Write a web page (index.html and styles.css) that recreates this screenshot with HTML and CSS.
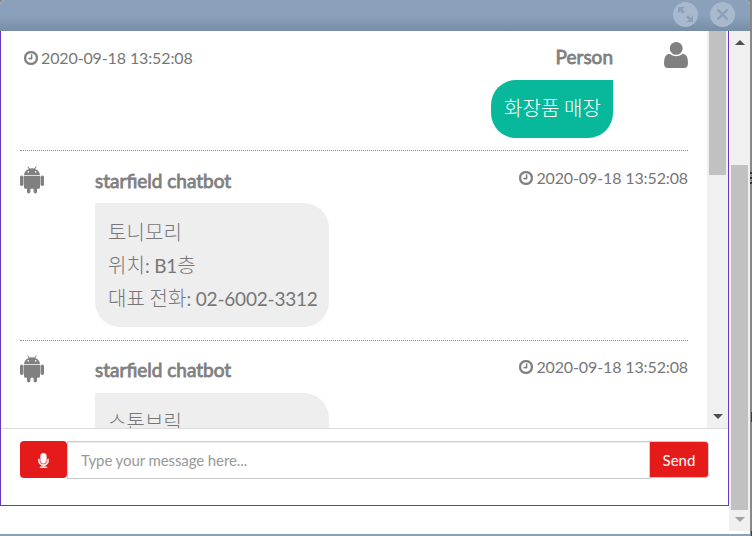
FILE: index.html
```html
<!DOCTYPE html>
<html lang="ko">
<head>
<meta charset="utf-8">
<title>starfield chatbot</title>
<link rel="stylesheet" href="styles.css">
</head>
<body>
<svg class="sprite" aria-hidden="true">
  <symbol id="clock" viewBox="128 128 1536 1536"><path d="M1024 544v448q0 14-9 23t-23 9h-320q-14 0-23-9t-9-23v-64q0-14 9-23t23-9h224v-352q0-14 9-23t23-9h64q14 0 23 9t9 23zm416 352q0-148-73-273t-198-198-273-73-273 73-198 198-73 273 73 273 198 198 273 73 273-73 198-198 73-273zm224 0q0 209-103 385.500t-279.500 279.500-385.500 103-385.500-103-279.500-279.500-103-385.500 103-385.500 279.500-279.500 385.500-103 385.500 103 279.500 279.500 103 385.500z"/></symbol>
  <symbol id="android" viewBox="0 0 24 28">
    <path fill-rule="evenodd" d="M4 9q.2-4.200 4.800-6.100L7.300.7l.6-.4 1.800 2.300q2.300-.6 4.600 0L16.100.3l.6.4L15.200 2.900Q19.800 4.800 20 9zM8.300 5.100a.8.8 0 1 0 0 1.600.8.8 0 0 0 0-1.600zm7.400 0a.8.8 0 1 0 0 1.600.8.8 0 0 0 0-1.600z"/>
    <path d="M4 9.700h16v11.500q0 1.600-1.600 1.600H17v3q0 1.700-1.700 1.700t-1.700-1.700v-3h-3.200v3q0 1.700-1.700 1.700T7 25.800v-3H5.600q-1.600 0-1.600-1.600z"/>
    <rect x="0" y="9.500" width="3.500" height="10.500" rx="1.700"/><rect x="20.500" y="9.500" width="3.500" height="10.500" rx="1.700"/>
  </symbol>
</svg>
<div class="desktop">
<div class="window">
  <header class="titlebar">
    <button class="round" aria-label="Expand"><svg width="25" height="25" viewBox="0 0 25 25"><path d="M5 5h6.500L9.300 7.200l2.500 2.500-2 2-2.500-2.500L5 11.500zM20 20h-6.500l2.200-2.200-2.500-2.500 2-2 2.500 2.500L20 13.500z"/></svg></button>
    <button class="round" aria-label="Close"><svg width="25" height="25" viewBox="0 0 25 25"><path class="cross" d="M7.500 7.500l10 10m0-10l-10 10"/></svg></button>
  </header>
  <div class="body">
    <main class="chat">
      <div class="history">
        <div class="messages">
          <section class="message mine">
            <time><svg class="clock"><use href="#clock"/></svg> 2020-09-18 13:52:08</time>
            <div class="content">
              <h2>Person</h2>
              <div class="bubble"><span class="ko">화장품 매장</span></div>
            </div>
            <svg class="user" viewBox="0 0 24 26"><circle cx="12.200" cy="6.400" r="6.400"/><path d="M5.500 11.800Q8 14.200 12.200 14.200t6.600-2.400Q24 12 24 21.200q0 4.800-3.700 4.800H3.700Q0 26 0 21.200 0 12 5.500 11.800z"/></svg>
          </section>
          <section class="message bot">
            <svg class="android"><use href="#android"/></svg>
            <div class="content">
              <h2>starfield chatbot</h2>
              <div class="bubble"><span class="ko">토니모리</span><br><span class="ko">위치</span>: B1<span class="ko">층</span><br><span class="ko">대표 전화</span>: 02-6002-3312</div>
            </div>
            <time><svg class="clock"><use href="#clock"/></svg> 2020-09-18 13:52:08</time>
          </section>
          <section class="message bot next">
            <svg class="android"><use href="#android"/></svg>
            <div class="content">
              <h2>starfield chatbot</h2>
              <div class="bubble"><span class="ko">스톤브릭</span></div>
            </div>
            <time><svg class="clock"><use href="#clock"/></svg> 2020-09-18 13:52:08</time>
          </section>
        </div>
        <div class="scroll inner"><i class="thumb"></i><i class="arrow down"></i></div>
      </div>
      <form class="composer">
        <button type="button" class="mic" aria-label="Record"><svg viewBox="320 0 1152 1664" width="11" height="15"><path d="M1472 704v128q0 221-147.500 384.500t-364.500 187.500v132h256q26 0 45 19t19 45-19 45-45 19h-640q-26 0-45-19t-19-45 19-45 45-19h256v-132q-217-24-364.500-187.500t-147.500-384.500v-128q0-26 19-45t45-19 45 19 19 45v128q0 185 131.500 316.500t316.500 131.500 316.500-131.500 131.500-316.500v-128q0-26 19-45t45-19 45 19 19 45zm-256-384v512q0 132-94 226t-226 94-226-94-94-226v-512q0-132 94-226t226-94 226 94 94 226z"/></svg></button>
        <input type="text" placeholder="Type your message here...">
        <button type="button" class="send">Send</button>
      </form>
    </main>
    <div class="scroll outer"><i class="arrow up"></i><i class="thumb"></i><i class="arrow down muted"></i></div>
  </div>
</div>
<div class="backdrop"><i class="speck one"></i><i class="speck two"></i><i class="speck three"></i></div>
</div>
</body>
</html>
```
FILE: styles.css
```css
* { box-sizing: border-box; }
body {
  margin: 0;
  width: 752px;
  height: 536px;
  overflow: hidden;
  background: #888;
  font: 16px/20px Lato, "Noto Sans CJK KR", sans-serif;
  color: #777;
}
.sprite { position: absolute; width: 0; height: 0; }
svg { display: block; fill: #808080; }
button, input { font: inherit; border: 0; margin: 0; padding: 0; }
.desktop { display: flex; height: 536px; }
.backdrop { width: 2px; display: flex; flex-direction: column; }
.speck { background: #1d4870; }
.one { height: 14px; margin-top: 172px; background: repeating-linear-gradient(#333 0 2px, #888 2px 5px); }
.two { width: 1px; height: 10px; margin: 226px 0 109px 1px; }
.three { width: 1px; height: 5px; margin-left: 1px; }
.window {
  width: 750px;
  height: 536px;
  display: flex;
  flex-direction: column;
  border-radius: 5px 5px 0 0;
  border-bottom: 2px solid #8aa0bb;
  background: #fff;
  overflow: hidden;
}
.titlebar {
  flex: 0 0 31px;
  display: flex;
  justify-content: flex-end;
  gap: 12px;
  padding: 2px 15px 0 0;
  background: linear-gradient(#8aa0bb 0, #8aa0bb 50%, #778ea7 100%);
}
.round { width: 25px; height: 25px; border-radius: 50%; background: #a9b9cd; }
.round svg { fill: #8aa0bb; }
.round .cross { stroke: #8aa0bb; stroke-width: 2.4; }
.body { flex: 1; display: flex; min-height: 0; }
.chat {
  width: 729px;
  height: 475px;
  border: solid #673ab7;
  border-width: 0 1px 1px;
}
.history { display: flex; height: 397px; overflow: hidden; }
.messages { width: 706px; padding: 0 19px; }
.message { display: flex; align-items: flex-start; }
.mine { height: 120px; border-bottom: 1px dotted #888; }
.bot { height: 190px; border-bottom: 1px dotted #888; }
time { display: flex; align-items: center; gap: 3px; white-space: nowrap; letter-spacing: -0.12px; }
.clock { width: 14px; height: 14px; stroke: #808080; stroke-width: 40; }
.mine time { margin: 17px 0 0 4px; }
.bot time { margin: 17px 0 0 auto; }
.next time { margin-top: 16px; }
.mine .content { margin: 14px 0 0 auto; text-align: right; }
.user { width: 24px; height: 26px; margin: 11px 0 0 51px; }
.android { width: 24px; height: 28px; margin: 15px 51px 0 0; }
.next .android { margin-top: 14px; }
.bot .content { margin-top: 17px; }
.next .content { margin-top: 16px; }
h2 {
  margin: 0;
  font-size: 19px;
  line-height: 25px;
  font-weight: 400;
  color: #808080;
  -webkit-text-stroke: .8px #808080;
}
.mine h2 { margin-top: -1px; padding-bottom: 1px; }
.bubble {
  width: max-content;
  padding: 12px 13px;
  font-size: 19px;
  line-height: 33px;
  white-space: nowrap;
}
.ko { font-size: 20px; font-weight: 300; line-height: 1; letter-spacing: 0.1px; word-spacing: -1px; }
.mine .bubble { margin-top: 10px; height: 58px; width: 122px; color: #fff; background: #08b89b; border-radius: 25px 0 25px 25px; }
.bot .bubble { margin-top: 10px; padding-top: 13px; height: 124px; width: 234px; background: #eee; border-radius: 0 25px 25px 25px; letter-spacing: -0.2px; }
.next .bubble { margin-top: 11px; }
.scroll { background: #f0f0f0; display: flex; flex-direction: column; align-items: center; }
.thumb { display: block; width: 17px; background: #c1c1c1; }
.inner { width: 21px; }
.inner .thumb { height: 144px; }
.inner .down { margin: auto 0 9px; }
.outer { width: 21px; height: 500px; }
.outer .thumb { height: 345px; margin: 120px 0 7px; }
.outer .up { margin-top: 9px; }
.arrow { border: 5px solid transparent; border-width: 0 5px; }
.up { border-bottom: 5px solid #505050; }
.down { border-top: 5px solid #505050; }
.outer .muted { border-top-color: #a3a3a3; }
.composer {
  display: flex;
  align-items: flex-start;
  height: 77px;
  padding: 12px 19px 0 19px;
  border-top: 1px solid #ddd;
}
.mic {
  width: 47px;
  height: 37px;
  display: grid;
  place-items: center;
  border-radius: 4px;
  background: #e51b1b;
}
.mic svg { fill: #fff; stroke: #fff; stroke-width: 50; margin-top: 1px; }
input {
  flex: 1;
  height: 38px;
  border: 1px solid #ccc;
  padding: 0 13px;
  font-size: 15px;
  letter-spacing: -0.1px;
  box-shadow: inset 0 1px 1px rgba(0, 0, 0, .08);
  outline: 0;
}
input::placeholder { color: #999; opacity: 1; }
.send {
  width: 59px;
  height: 37px;
  border: 1px solid #ccc;
  border-left: 0;
  border-radius: 0 4px 4px 0;
  background: #e51b1b;
  color: #fff;
  font-size: 15px;
}
```
